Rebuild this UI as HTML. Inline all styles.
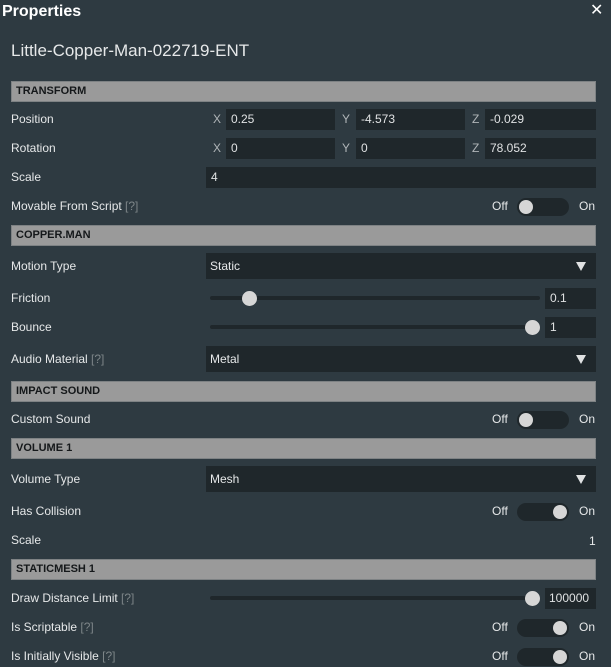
<!DOCTYPE html>
<html><head><meta charset="utf-8"><style>
*{margin:0;padding:0;box-sizing:border-box}
body{width:611px;height:667px;background:#2e3a41;font-family:"Liberation Sans",sans-serif;color:#e6e8e9;position:relative;overflow:hidden;font-size:12px}
.a{position:absolute}
.t{position:absolute;line-height:14px;white-space:nowrap}
.bar{position:absolute;left:11px;width:585px;height:21px;background:#9a9a9a;border:1px solid #7e8284;color:#15181a;font-size:11px;font-weight:bold;line-height:19px;padding-left:4px}
.in{position:absolute;background:#1f272b;height:21px;color:#e0e2e3;line-height:21px;padding-left:5px}
.lbl{position:absolute;left:11px;line-height:14px}
.q{color:#7d8588}
.dd{position:absolute;left:206px;width:390px;height:26px;background:#1f272b;line-height:26px;padding-left:4px}
.dd:after{content:"";position:absolute;right:10px;top:9px;border-left:5px solid transparent;border-right:5px solid transparent;border-top:9px solid #e0e2e3}
.tg{position:absolute;left:517px;width:52px;height:18px;border-radius:9px;background:#1f272b}
.tg i{position:absolute;top:2px;width:14px;height:14px;border-radius:7px;background:#d6d6d6}
.track{position:absolute;left:210px;height:4px;border-radius:2px;background:#1f272b}
.knob{position:absolute;width:15px;height:15px;border-radius:8px;background:#d6d6d6}
.xy{position:absolute;color:#b0b5b8;line-height:14px}
</style></head><body>
<div class="t" style="left:2px;top:5px;font-size:16px;font-weight:bold;color:#fff">Properties</div>
<div class="t" style="left:590px;top:4px;font-size:16px;color:#fff">✕</div>
<div class="t" style="left:11px;top:42px;font-size:17px;line-height:18px">Little-Copper-Man-022719-ENT</div>

<div class="bar" style="top:81px">TRANSFORM</div>
<div class="lbl" style="top:112px">Position</div>
<div class="xy" style="left:213px;top:112px">X</div><div class="in" style="left:226px;top:109px;width:109px">0.25</div>
<div class="xy" style="left:342px;top:112px">Y</div><div class="in" style="left:356px;top:109px;width:109px">-4.573</div>
<div class="xy" style="left:472px;top:112px">Z</div><div class="in" style="left:485px;top:109px;width:111px">-0.029</div>
<div class="lbl" style="top:141px">Rotation</div>
<div class="xy" style="left:213px;top:141px">X</div><div class="in" style="left:226px;top:138px;width:109px">0</div>
<div class="xy" style="left:342px;top:141px">Y</div><div class="in" style="left:356px;top:138px;width:109px">0</div>
<div class="xy" style="left:472px;top:141px">Z</div><div class="in" style="left:485px;top:138px;width:111px">78.052</div>
<div class="lbl" style="top:170px">Scale</div>
<div class="in" style="left:206px;top:167px;width:390px">4</div>
<div class="lbl" style="top:199px">Movable From Script <span class="q">[?]</span></div>
<div class="t" style="left:492px;top:199px">Off</div><div class="tg" style="top:198px"><i style="left:2px"></i></div><div class="t" style="left:579px;top:199px">On</div>

<div class="bar" style="top:225px">COPPER.MAN</div>
<div class="lbl" style="top:259px">Motion Type</div>
<div class="dd" style="top:253px">Static</div>
<div class="lbl" style="top:291px">Friction</div>
<div class="track" style="top:296px;width:330px"></div><div class="knob" style="left:242px;top:291px"></div>
<div class="in" style="left:545px;top:288px;width:51px">0.1</div>
<div class="lbl" style="top:320px">Bounce</div>
<div class="track" style="top:325px;width:330px"></div><div class="knob" style="left:525px;top:320px"></div>
<div class="in" style="left:545px;top:317px;width:51px">1</div>
<div class="lbl" style="top:352px">Audio Material <span class="q">[?]</span></div>
<div class="dd" style="top:346px">Metal</div>

<div class="bar" style="top:381px">IMPACT SOUND</div>
<div class="lbl" style="top:412px">Custom Sound</div>
<div class="t" style="left:492px;top:412px">Off</div><div class="tg" style="top:411px"><i style="left:2px"></i></div><div class="t" style="left:579px;top:412px">On</div>

<div class="bar" style="top:438px">VOLUME 1</div>
<div class="lbl" style="top:472px">Volume Type</div>
<div class="dd" style="top:466px">Mesh</div>
<div class="lbl" style="top:504px">Has Collision</div>
<div class="t" style="left:492px;top:504px">Off</div><div class="tg" style="top:503px"><i style="left:36px"></i></div><div class="t" style="left:579px;top:504px">On</div>
<div class="lbl" style="top:533px">Scale</div>
<div class="t" style="left:589px;top:534px">1</div>

<div class="bar" style="top:559px">STATICMESH 1</div>
<div class="lbl" style="top:591px">Draw Distance Limit <span class="q">[?]</span></div>
<div class="track" style="top:596px;width:330px"></div><div class="knob" style="left:525px;top:591px"></div>
<div class="in" style="left:545px;top:588px;width:51px;padding-left:4px">100000</div>
<div class="lbl" style="top:620px">Is Scriptable <span class="q">[?]</span></div>
<div class="t" style="left:492px;top:620px">Off</div><div class="tg" style="top:619px"><i style="left:36px"></i></div><div class="t" style="left:579px;top:620px">On</div>
<div class="lbl" style="top:649px">Is Initially Visible <span class="q">[?]</span></div>
<div class="t" style="left:492px;top:649px">Off</div><div class="tg" style="top:648px"><i style="left:36px"></i></div><div class="t" style="left:579px;top:649px">On</div>
</body></html>
